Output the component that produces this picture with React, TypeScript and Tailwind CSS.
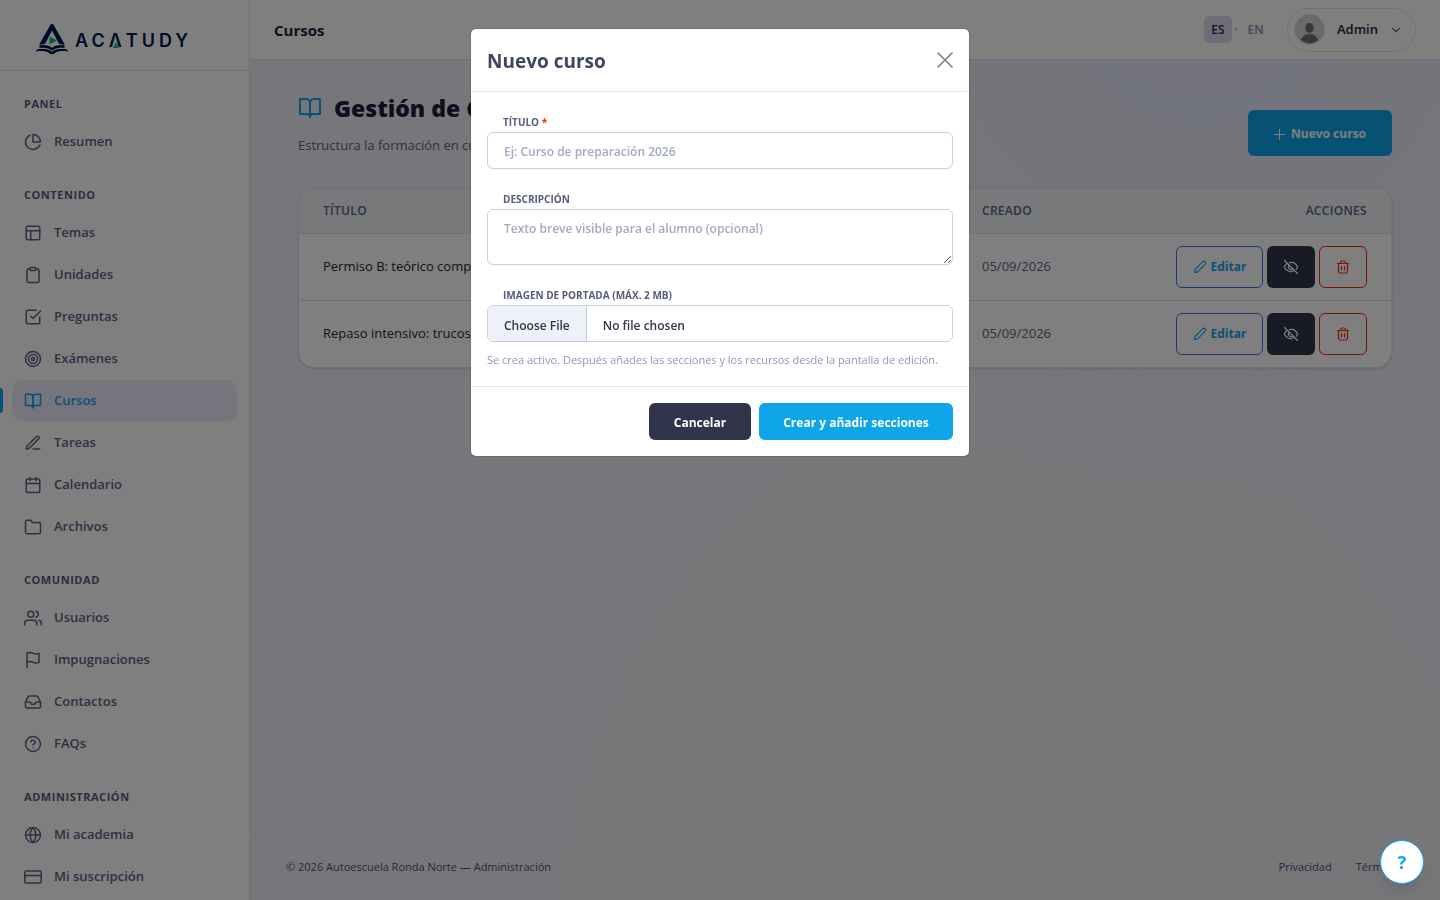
import React, { useState } from 'react'
import {
  FiPieChart, FiLayout, FiClipboard, FiCheckSquare, FiTarget, FiBookOpen, FiEdit3, FiCalendar,
  FiFolder, FiUsers, FiFlag, FiInbox, FiHelpCircle, FiGlobe, FiCreditCard, FiChevronDown,
} from 'react-icons/fi'
import type { IconType } from 'react-icons'
import { clsx } from 'clsx'

interface NavItem {
  label: string
  icon: IconType
}

interface NavSection {
  title: string
  items: NavItem[]
}

const SECTIONS: NavSection[] = [
  { title: 'Panel', items: [{ label: 'Resumen', icon: FiPieChart }] },
  {
    title: 'Contenido',
    items: [
      { label: 'Temas', icon: FiLayout },
      { label: 'Unidades', icon: FiClipboard },
      { label: 'Preguntas', icon: FiCheckSquare },
      { label: 'Exámenes', icon: FiTarget },
      { label: 'Cursos', icon: FiBookOpen },
      { label: 'Tareas', icon: FiEdit3 },
      { label: 'Calendario', icon: FiCalendar },
      { label: 'Archivos', icon: FiFolder },
    ],
  },
  {
    title: 'Comunidad',
    items: [
      { label: 'Usuarios', icon: FiUsers },
      { label: 'Impugnaciones', icon: FiFlag },
      { label: 'Contactos', icon: FiInbox },
      { label: 'FAQs', icon: FiHelpCircle },
    ],
  },
  {
    title: 'Administración',
    items: [
      { label: 'Mi academia', icon: FiGlobe },
      { label: 'Mi suscripción', icon: FiCreditCard },
    ],
  },
]

const COURSES = [
  { title: 'Permiso B: teórico completo', created: '05/09/2026' },
  { title: 'Repaso intensivo: trucos', created: '05/09/2026' },
]

function Logo() {
  return (
    <a href="#" className="flex items-center gap-1.5 text-[#00194a]">
      <svg width="34" height="31" viewBox="0 0 34 31" fill="none">
        <path d="M15.200 1.200a2 2 0 0 1 3.600 0L30 21l-6-1.200L17 6.500 10 19.800 4 21z" fill="currentColor" />
        <path d="M14.500 12.500l7.500 4-7.500 4z" fill="#10b981" />
        <path d="M4.500 21.500c5-1 9.500-.5 12.500 2.500 3-3 7.500-3.500 12.500-2.500v2.500c-5-.7-9.500 0-12.500 2.800C14 24 9.500 23.300 4.500 24z" fill="currentColor" />
        <path d="M2.500 25.300c6-1 10.500-.6 14.500 2.500 4-3.100 8.500-3.500 14.500-2.500l2 2.200c-6-.8-10.500-.6-13.500 1.400-1.500 1.600-4.500 1.600-6 0-3-2-7.500-2.200-13.500-1.400z" fill="currentColor" />
      </svg>
      <span className="pt-1 flex text-lg leading-none font-semibold tracking-[4px] font-[Inter,sans-serif]">
        AC
        <span className="relative">
          Λ
          <svg className="absolute bottom-0.5 left-1" width="6" height="6" viewBox="0 0 6 6">
            <path d="M3 0l3 6H0z" fill="#10b981" />
          </svg>
        </span>
        TUDY
      </span>
    </a>
  )
}

function Sidebar() {
  return (
    <aside className="w-[250px] shrink-0 bg-white border-r border-[#e2e2f0]">
      <div className="h-[71px] pl-[35px] pt-2 flex items-center border-b border-[#e2e2f0]">
        <Logo />
      </div>
      <nav className="pt-6">
        {SECTIONS.map(section => (
          <div key={section.title} className="mb-6">
            <h2 className="h-[18px] pl-6 text-[11px] leading-[18px] font-bold uppercase tracking-wider text-[#555d7c]">
              {section.title}
            </h2>
            <ul className="mt-2 px-3 flex flex-col gap-px">
              {section.items.map(({ label, icon: Icon }) => {
                const active = label === 'Cursos'
                return (
                  <li key={label} className="relative">
                    {active && <span className="absolute -left-3 top-2 h-[25px] w-[3px] rounded-r bg-[#0ea5e9]" />}
                    <a
                      href="#"
                      className={clsx(
                        'h-[41px] px-3 flex items-center gap-3 rounded-[10px] text-[13px] font-semibold',
                        active ? 'bg-[#ebebfa] text-[#0ea5e9]' : 'text-[#5a6285]'
                      )}
                    >
                      <Icon size={18} />
                      {label}
                    </a>
                  </li>
                )
              })}
            </ul>
          </div>
        ))}
      </nav>
    </aside>
  )
}

function Topbar() {
  return (
    <header className="h-[60px] px-6 flex items-center justify-between bg-[#fefefd] border-b border-[#e2e2f0]">
      <span className="pt-0.5 text-[15px] font-bold text-[#1a1f3c]">Cursos</span>
      <div className="flex items-center text-xs font-semibold">
        <button className="h-[27px] w-7 rounded-[5px] bg-[#dcdcf5] text-[#23263f]">ES</button>
        <span className="w-2 text-center text-[#9a9fb5]">·</span>
        <button className="w-[31px] text-[#8a8fa5]">EN</button>
        <button className="ml-4 h-11 w-[129px] pl-1.5 pr-3 flex items-center rounded-full border border-[#e2e2f0] text-[13px] text-[#23263f]">
          <svg width="31" height="31" viewBox="0 0 31 31">
            <circle cx="15.500" cy="15.500" r="15" fill="#d4d5d8" stroke="#e2e2f0" />
            <ellipse cx="15.500" cy="14" rx="4.200" ry="5" fill="#6d7078" />
            <path d="M7 26c1-4 4.500-6 8.500-6s7.500 2 8.500 6c-5 4.500-12 4.500-17 0z" fill="#6d7078" />
          </svg>
          <span className="ml-3 grow text-left">Admin</span>
          <FiChevronDown size={14} className="text-[#5a6285]" />
        </button>
      </div>
    </header>
  )
}

function PencilIcon() {
  return (
    <svg width="14" height="14" viewBox="0 0 14 14" fill="none" stroke="currentColor" strokeWidth="1.200" strokeLinejoin="round">
      <path d="M1.500 12.500l.6-3.200L9.600 1.800a1.600 1.600 0 0 1 2.500 2.500L4.600 11.800z" />
    </svg>
  )
}

function EyeOffIcon() {
  return (
    <svg width="16" height="16" viewBox="0 0 16 16" fill="none" stroke="currentColor" strokeWidth="1.200" strokeLinecap="round">
      <path d="M1.500 1.500l13 13M6.500 3.600c3.600-.8 6.600 1.200 8.200 4.400-.4.900-.9 1.600-1.500 2.300M3.900 4.600C2.800 5.400 1.900 6.600 1.300 8c2 4.200 6 5.800 9.800 3.600" />
      <path d="M9.800 9.800A2.500 2.500 0 0 1 6.200 6.200" />
    </svg>
  )
}

function TrashIcon() {
  return (
    <svg width="14" height="14" viewBox="0 0 14 14" fill="none" stroke="currentColor" strokeWidth="1.200" strokeLinecap="round">
      <path d="M1.500 3.500h11M4.500 3.500v-1a1.500 1.500 0 0 1 1.500-1.500h2a1.500 1.500 0 0 1 1.500 1.500v1M2.500 3.500v8a1.500 1.500 0 0 0 1.500 1.500h6a1.500 1.500 0 0 0 1.500-1.500v-8M5.500 6.500v3.500M8.500 6.500v3.500" />
    </svg>
  )
}

function CourseTable() {
  return (
    <div className="rounded-2xl border border-[#e2e2f0] bg-white shadow-sm overflow-hidden">
      <table className="w-full table-fixed text-left text-[13px]">
        <thead>
          <tr className="h-11 bg-[#f1f2f6] text-xs uppercase tracking-wide text-[#5a6285]">
            <th className="px-6 font-semibold">Título</th>
            <th className="w-[190px] px-6 font-semibold">Creado</th>
            <th className="w-[243px] px-6 text-right font-semibold">Acciones</th>
          </tr>
        </thead>
        <tbody>
          {COURSES.map(course => (
            <tr key={course.title} className="h-[67px] border-t border-[#dfe1ec]">
              <td className="px-6 text-[#23263f]">{course.title}</td>
              <td className="px-6 text-[#5a6285]">{course.created}</td>
              <td className="px-6">
                <div className="flex justify-end gap-1">
                  <button className="h-[42px] w-[87px] flex items-center justify-center gap-1 rounded-md border border-[#3b6ee8] text-xs font-bold text-[#0ea5e9]">
                    <PencilIcon />
                    Editar
                  </button>
                  <button aria-label="Ocultar" className="h-[42px] w-12 flex items-center justify-center rounded-md bg-[#30354b] text-white">
                    <EyeOffIcon />
                  </button>
                  <button aria-label="Eliminar" className="h-[42px] w-12 flex items-center justify-center rounded-md border border-[#f02711] text-[#f02711]">
                    <TrashIcon />
                  </button>
                </div>
              </td>
            </tr>
          ))}
        </tbody>
      </table>
    </div>
  )
}

const labelClass = 'block pl-4 text-[10px] leading-5 font-bold uppercase text-[#565c7c]'
const fieldClass = 'block w-full rounded-md border border-[#c8cde0] text-xs font-semibold text-[#30354b] placeholder-[#a3a9c4] outline-none'

function NewCourseModal({ onClose }: { onClose: () => void }) {
  return (
    <div className="fixed inset-0 z-20 bg-black/50 flex items-start justify-center pt-7">
      <form
        role="dialog"
        aria-labelledby="modal-title"
        onSubmit={e => e.preventDefault()}
        className="w-full max-w-[500px] rounded-md border border-black/10 bg-white bg-clip-padding"
      >
        <div className="h-[63px] px-4 flex items-center justify-between border-b border-[#e1e3ec]">
          <h2 id="modal-title" className="pt-0.5 text-[19px] font-bold text-[#3f4662]">Nuevo curso</h2>
          <button type="button" aria-label="Cerrar" onClick={onClose} className="text-[#7f7f7f]">
            <svg width="16" height="16" viewBox="0 0 16 16" fill="none" stroke="currentColor" strokeWidth="1.600" strokeLinecap="round">
              <path d="M1 1l14 14M15 1L1 15" />
            </svg>
          </button>
        </div>

        <div className="px-4 pt-5 pb-4">
          <label htmlFor="title" className={labelClass}>
            Título <span className="text-[#ff2a12]">*</span>
          </label>
          <input id="title" type="text" placeholder="Ej: Curso de preparación 2026" className={clsx(fieldClass, 'h-[37px] px-4 pt-0.5')} />

          <label htmlFor="description" className={clsx(labelClass, 'mt-5')}>Descripción</label>
          <textarea id="description" placeholder="Texto breve visible para el alumno (opcional)" className={clsx(fieldClass, 'h-14 px-4 py-2 leading-[22px]')} />

          <label htmlFor="cover" className={clsx(labelClass, 'mt-5')}>Imagen de portada (máx. 2 MB)</label>
          <input
            id="cover"
            type="file"
            className={clsx(
              fieldClass,
              'h-[37px] leading-[35px] overflow-hidden file:h-[35px] file:mr-4 file:px-4 file:border-0 file:border-r file:border-solid file:border-[#c8cde0] file:bg-[#eef1f7] file:pt-0.5 file:text-[#30354b] file:font-semibold'
            )}
          />
          <p className="mt-2 text-[11px] leading-5 text-[#8f97b5]">
            Se crea activo. Después añades las secciones y los recursos desde la pantalla de edición.
          </p>
        </div>

        <div className="p-4 flex justify-end gap-2 border-t border-[#e1e3ec] text-xs font-bold text-white">
          <button type="button" onClick={onClose} className="h-[37px] w-[102px] pt-0.5 rounded-md bg-[#30354b]">Cancelar</button>
          <button type="submit" className="h-[37px] w-[194px] pt-0.5 rounded-md bg-[#0ea5e9]">Crear y añadir secciones</button>
        </div>
      </form>
    </div>
  )
}

export default function App() {
  const [showModal, setShowModal] = useState(true)

  return (
    <div className="h-screen flex overflow-hidden font-['Open_Sans','Noto_Sans',sans-serif]">
      <Sidebar />
      <div className="min-w-0 grow flex flex-col bg-[#eeeff6] bg-[radial-gradient(ellipse_at_65%_110%,#f0eeea_0%,transparent_45%),radial-gradient(ellipse_at_80%_0%,#e5e8f8_0%,transparent_40%)]">
        <Topbar />
        <main className="grow px-12 pt-8">
          <div className="mb-8 flex items-end justify-between">
            <div>
              <h1 className="flex items-center gap-3 text-[23px] leading-8 font-extrabold text-[#1a1f3c]">
                <FiBookOpen size={24} className="text-[#0ea5e9]" />
                Gestión de Cursos
              </h1>
              <p className="mt-2.5 text-[13px] leading-[22px] text-[#5a6285]">Estructura la formación en cursos</p>
            </div>
            <button
              onClick={() => setShowModal(true)}
              className="h-[46px] w-36 pt-0.5 flex items-center justify-center gap-1.5 rounded-md bg-[#0ea5e9] text-xs font-bold text-white"
            >
              <svg width="11" height="11" viewBox="0 0 11 11" stroke="currentColor">
                <path d="M5.500 0v11M0 5.500h11" />
              </svg>
              Nuevo curso
            </button>
          </div>
          <CourseTable />
        </main>
        <footer className="h-[68px] px-9 pt-0.5 flex items-center justify-between border-t border-[#e2e2f0] text-[11px] text-[#4a5170]">
          <span>© 2026 Autoescuela Ronda Norte — Administración</span>
          <div className="flex gap-6">
            <a href="#">Privacidad</a>
            <a href="#">Términos</a>
          </div>
        </footer>
      </div>

      {showModal && <NewCourseModal onClose={() => setShowModal(false)} />}

      <button className="fixed right-4 bottom-4 z-30 size-11 rounded-full border border-[#0ea5e9] bg-white text-lg font-bold text-[#0ea5e9] shadow-lg">
        ?
      </button>
    </div>
  )
}
